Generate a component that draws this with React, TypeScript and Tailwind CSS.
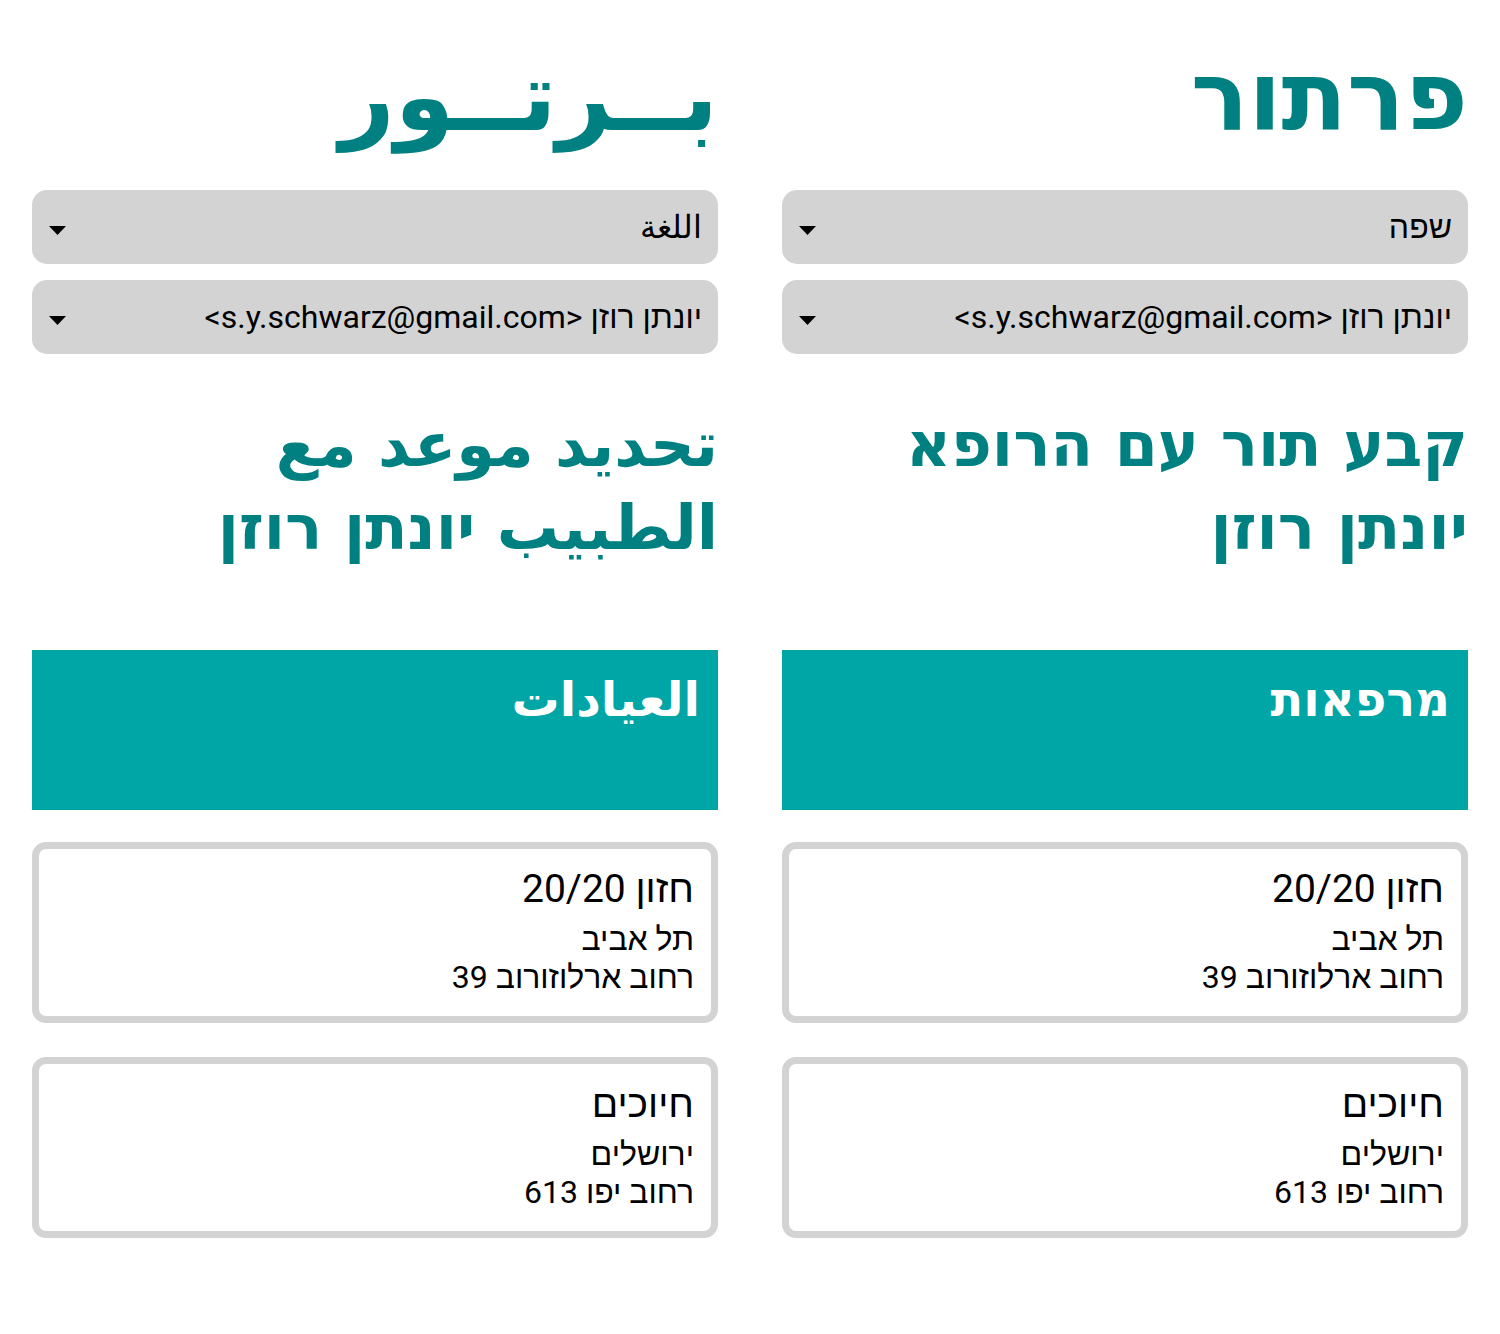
const clinics = [
  { name: "חזון 20/20", city: "תל אביב", street: "רחוב ארלוזורוב 39" },
  { name: "חיוכים", city: "ירושלים", street: "רחוב יפו 613" },
];

function Select({ label }: { label: string }) {
  return (
    <div className="flex h-[74px] items-center justify-between rounded-[15px] bg-[#d3d3d3] pl-[17px] pr-[16px] text-[32px] text-black">
      <span>{label}</span>
      <svg width="17" height="9" viewBox="0 0 17 9" className="mt-[7px]">
        <path d="M0 0h17L8.5 9z" fill="#000" />
      </svg>
    </div>
  );
}

function Column({
  title,
  langLabel,
  heading1,
  heading2,
  banner,
}: {
  title: string;
  langLabel: string;
  heading1: string;
  heading2: string;
  banner: string;
}) {
  return (
    <div className="flex flex-col">
      <h1 className="pt-[41px] font-['DejaVu_Sans',sans-serif] text-[96px] font-bold leading-[112px] text-[#008080]">
        {title}
      </h1>
      <div className="mt-[37px] flex flex-col gap-[16px]">
        <Select label={langLabel} />
        <Select label="יונתן רוזן <s.y.schwarz@gmail.com>" />
      </div>
      <h2 className="mt-[49px] font-['DejaVu_Sans',sans-serif] text-[62px] font-bold leading-[83px] text-[#008080]">
        {heading1}
        <br />
        {heading2}
      </h2>
      <div className="mt-[81px] h-[160px] bg-[#00a5a5] px-[18px] pt-[20px] font-['DejaVu_Sans',sans-serif] text-[48px] font-bold leading-[58px] text-white">
        {banner}
      </div>
      <div className="mt-[32px] flex flex-col gap-[34px]">
        {clinics.map((c) => (
          <div
            key={c.name}
            className="h-[181px] rounded-[14px] border-[7px] border-[#d3d3d3] bg-white pl-[18px] pr-[17px] pt-[17px] text-black"
          >
            <div className="text-[39px] leading-[47px]">{c.name}</div>
            <div className="mt-[7px] text-[32px] leading-[38px]">{c.city}</div>
            <div className="text-[32px] leading-[38px]">{c.street}</div>
          </div>
        ))}
      </div>
    </div>
  );
}

export default function App() {
  return (
    <div
      dir="rtl"
      className="grid min-h-[1334px] grid-cols-2 content-start gap-[64px] bg-white px-[32px] font-['Roboto',sans-serif]"
    >
      <Column
        title="פרתור"
        langLabel="שפה"
        heading1="קבע תור עם הרופא"
        heading2="יונתן רוזן"
        banner="מרפאות"
      />
      <Column
        title="بــرتــور"
        langLabel="اللغة"
        heading1="تحديد موعد مع"
        heading2="الطبيب יונתן רוזן"
        banner="العيادات"
      />
    </div>
  );
}
